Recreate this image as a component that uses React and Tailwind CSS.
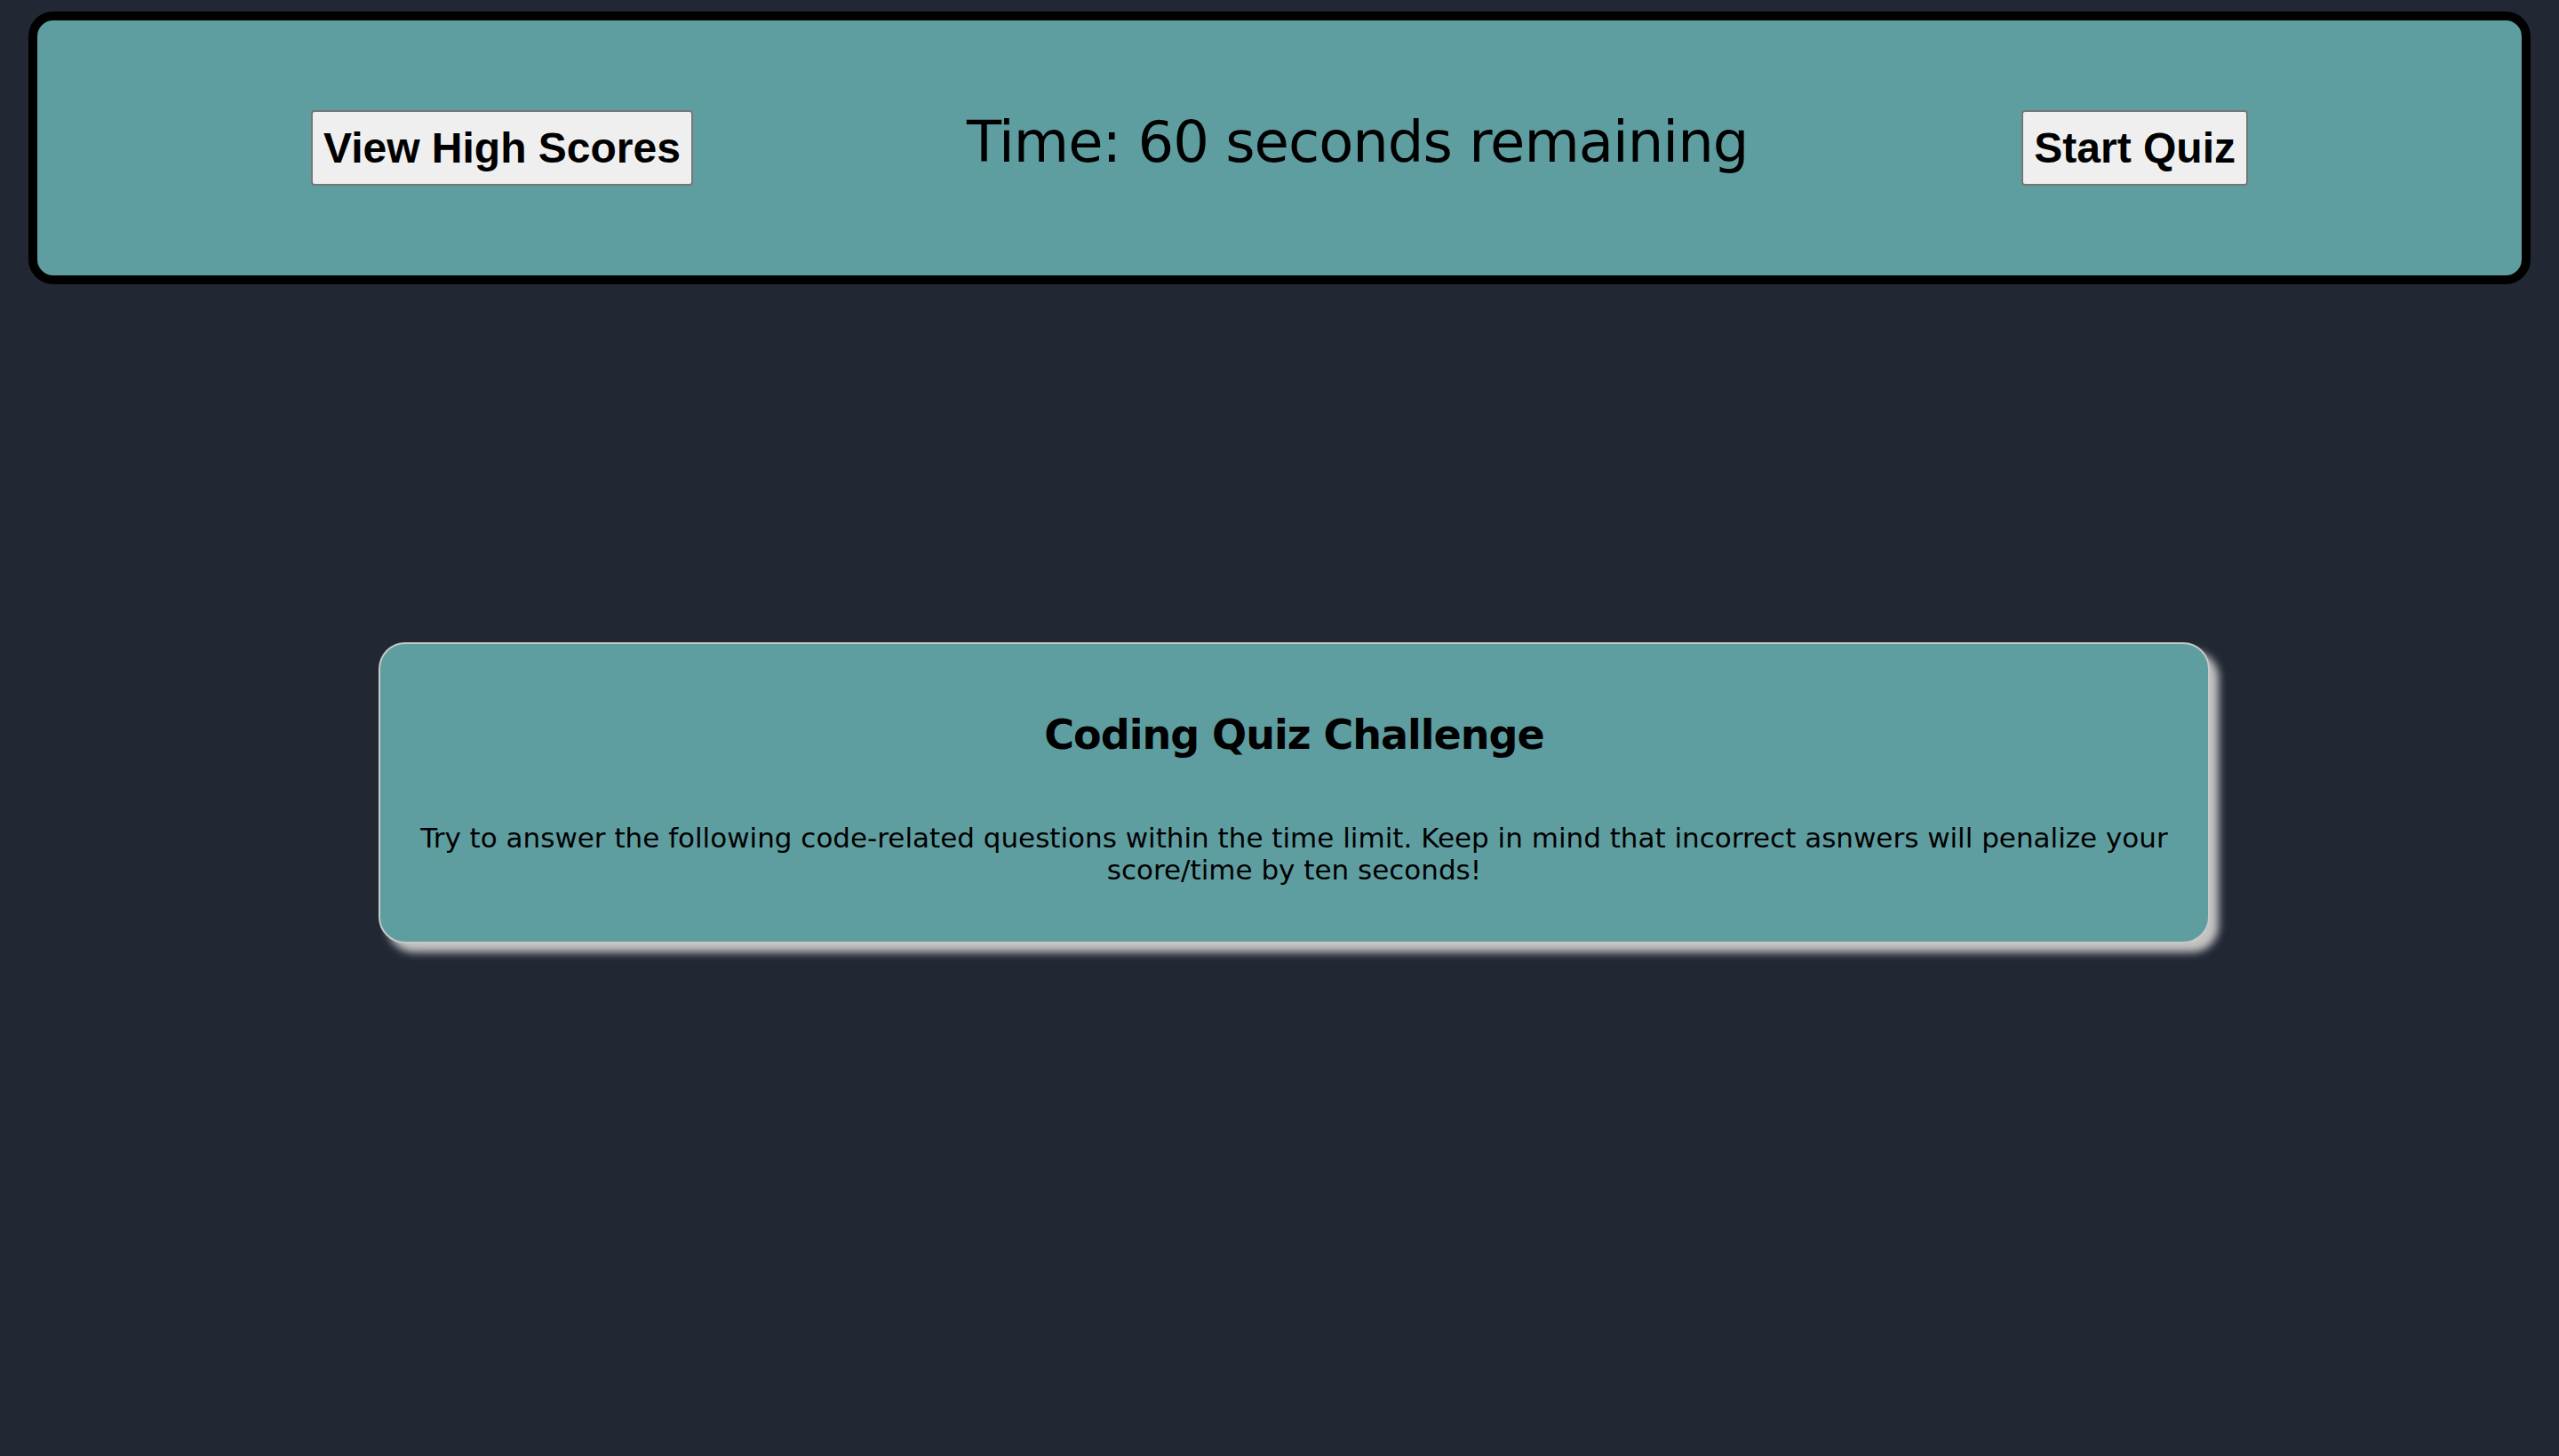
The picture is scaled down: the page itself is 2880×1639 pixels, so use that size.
export default function App() {
  return (
    <div className="min-h-screen bg-[#212733] pt-[13px] pb-[40px]">
      {/* Top bar: high scores, timer, start */}
      <header className="mx-[32px] h-[307px] border-[10px] border-black rounded-[28px] bg-[#5f9ea0] flex items-center justify-evenly">
        <button className="bg-[#efefef] border-2 border-[#767676] rounded-[4px] px-3 py-[14px] font-['Liberation_Sans',Arial,sans-serif] font-bold text-[48px] leading-[1.117] text-black">
          View High Scores
        </button>
        <div className="mb-[13px] font-['DejaVu_Sans',sans-serif] text-[64px] tracking-[-1px] text-black">
          Time: 60 seconds remaining
        </div>
        <button className="bg-[#efefef] border-2 border-[#767676] rounded-[4px] px-3 py-[14px] font-['Liberation_Sans',Arial,sans-serif] font-bold text-[48px] leading-[1.117] text-black">
          Start Quiz
        </button>
      </header>

      {/* Intro card */}
      <main className="mt-[403px] ml-[426px] w-[2061px] border-2 border-[#c8c8c8] rounded-[30px] bg-[#5f9ea0] shadow-[10px_10px_10px_#c4c4c4] px-[20px] pt-[75px] pb-[63px] text-center text-black font-['DejaVu_Sans',sans-serif]">
        <h1 className="font-bold text-[46px] tracking-[-1px] leading-[54px] mb-[71px]">
          Coding Quiz Challenge
        </h1>
        <p className="text-[31px] leading-[36px]">
          Try to answer the following code-related questions within the time limit. Keep in mind that incorrect asnwers will penalize your score/time by ten seconds!
        </p>
      </main>
    </div>
  );
}
